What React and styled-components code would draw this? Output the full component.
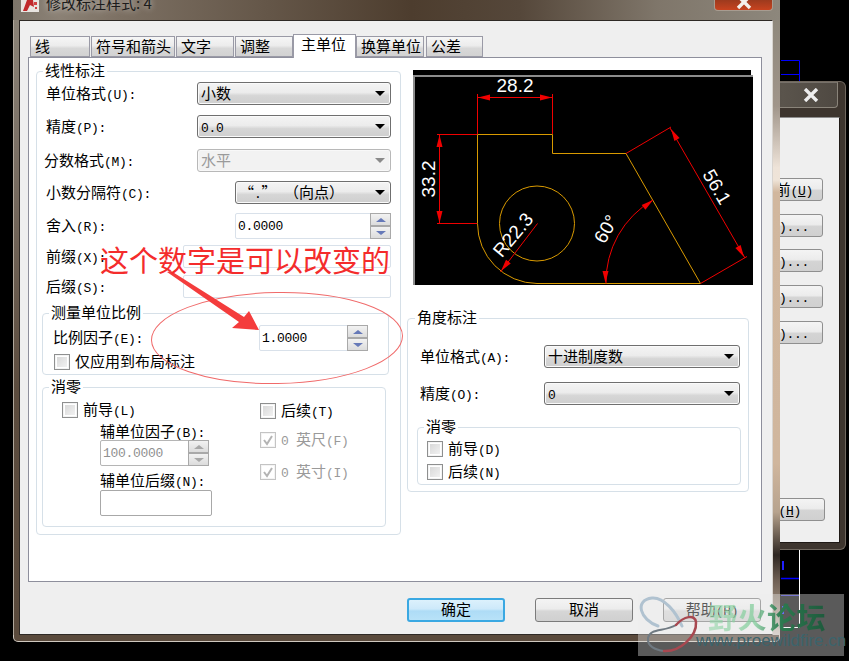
import React from "react";
import styled, { createGlobalStyle } from "styled-components";

const GlobalStyle = createGlobalStyle`
  html, body { margin: 0; padding: 0; background: #000; }
  body { font-family: "Noto Sans CJK SC", "Liberation Sans", sans-serif; font-size: 15px; color: #000; }
`;

const Page = styled.div`
  position: relative;
  width: 849px;
  height: 661px;
  overflow: hidden;
  background: #000;
`;

const Latin = styled.span`
  font-family: "Liberation Mono", monospace;
  font-size: 13px;
  letter-spacing: -0.3px;
`;

// SimSun look: latin runs are half the width of a CJK glyph
const T = ({ children }) =>
  String(children)
    .split(/([\x20-\x7e]+)/)
    .map((s, i) => (/^[\x20-\x7e]+$/.test(s) ? <Latin key={i}>{s}</Latin> : s));

const CadLines = styled.svg`
  position: absolute;
  left: 0;
  top: 0;
`;

/* back window */
const BackWindow = styled.div`
  position: absolute;
  left: 700px;
  top: 81px;
  width: 146px;
  height: 469px;
  box-sizing: border-box;
  display: flex;
  flex-direction: column;
  background: #3d352e;
  border: 1px solid #6f675e;
  border-left: none;
  border-radius: 0 6px 6px 0;
  padding: 0 5px 6px 0;
`;

const BackTitle = styled.div`
  height: 24px;
  margin-right: 2px;
  display: flex;
  justify-content: flex-end;
  align-items: center;
  padding-right: 18px;
  background: linear-gradient(90deg, #3e3ca0 0, #4a4640 34%, #5a544c 60%, #4f4942 100%);
  border: 1px solid #8a847a;
  border-top-color: #77716a;
  border-radius: 0 0 4px 4px;
`;

const BackClose = styled.svg`
  display: block;
`;

const BackClient = styled.div`
  flex: 1;
  margin-top: 9px;
  display: flex;
  flex-direction: column;
  align-items: flex-end;
  padding: 60px 16px 0 0;
  background: #efefef;
  border: 1px solid #1f1a16;
  border-top-color: #8d8d8d;
`;

const BackButton = styled.div`
  width: 100px;
  height: 23px;
  box-sizing: border-box;
  margin-top: ${(p) => p.$top}px;
  margin-right: ${(p) => p.$right || 0}px;
  padding-right: ${(p) => p.$pad}px;
  text-align: right;
  line-height: 19px;
  border: 1px solid #8f8f8f;
  border-radius: 3px;
  background: linear-gradient(#f4f4f4 0, #ececec 45%, #d4d4d4 55%, #d0d0d0 100%);
`;

const Under = styled.span`
  text-decoration: underline;
`;

/* main dialog */
const Dialog = styled.div`
  position: relative;
  width: 767px;
  height: 642px;
  margin-left: 13px;
  display: flex;
  flex-direction: column;
`;

const TitleBar = styled.div`
  height: 20px;
  box-sizing: border-box;
  display: flex;
  align-items: flex-start;
  padding-left: 8px;
  overflow: hidden;
  background: linear-gradient(90deg, #7d756a 0, #8b8175 6%, #7c7063 14%, #4d3d2e 52%, #55473a 66%, #7f766a 84%, #8d877c 100%);
`;

const TitleIcon = styled.svg`
  flex: none;
`;

const TitleText = styled.div`
  margin: -8px 0 0 7px;
  font-size: 15px;
  line-height: 22px;
  color: #1c1c1c;
  text-shadow: 0 0 6px rgba(255, 255, 255, 0.65);
`;

const CloseButton = styled.div`
  flex: none;
  margin-left: auto;
  margin-right: 7px;
  width: 59px;
  height: 11px;
  box-sizing: border-box;
  display: flex;
  justify-content: center;
  background: linear-gradient(#9c3a1e, #c8431f);
  border: 1px solid #a89c90;
  border-top: none;
  border-radius: 0 0 4px 4px;
  overflow: hidden;
`;

const Middle = styled.div`
  display: flex;
  height: 615px;
`;

const SideLeft = styled.div`
  width: 6px;
  box-sizing: border-box;
  background: linear-gradient(#8b8377 0, #7c7166 20%, #5c4c3e 60%, #5a4a3c 100%);
  border-left: 1px solid #b0a89c;
`;

const SideRight = styled.div`
  width: 7px;
  box-sizing: border-box;
  background: linear-gradient(#8f887c 0, #a0958a 14%, #eee3d8 24%, #efe4d8 26%, #d1b79e 28%, #d0b69d 72%, #b7a38e 80%, #2f2722 87%, #6d5e52 91%, #a29282 96%, #cfc7bf 100%);
`;

const Client = styled.div`
  width: 754px;
  box-sizing: border-box;
  background: #efefef;
  border: 1px solid #2e2925;
  border-right-color: #d8d4cf;
`;

const BottomEdge = styled.div`
  height: 7px;
  box-sizing: border-box;
  background: #5a4a3c;
  border: 1px solid #cfc8bf;
  border-top: none;
  border-radius: 0 0 5px 5px;
`;

const TabRow = styled.div`
  display: flex;
  align-items: flex-end;
  height: 36px;
  padding-left: 10px;
`;

const Tab = styled.div`
  position: relative;
  width: ${(p) => p.$w}px;
  height: ${(p) => (p.$active ? 24 : 21)}px;
  margin-right: ${(p) => p.$gap}px;
  box-sizing: border-box;
  padding-left: ${(p) => (p.$active ? 7 : 4)}px;
  line-height: 18px;
  border: 1px solid #9a9aa6;
  border-bottom: ${(p) => (p.$active ? "none" : "1px solid #9a9aa6")};
  background: ${(p) =>
    p.$active
      ? "#fff"
      : "linear-gradient(#f6f6f6 0, #ececec 45%, #d8d8d8 60%, #d2d2d2 100%)"};
  z-index: ${(p) => (p.$active ? 1 : 0)};
  margin-bottom: ${(p) => (p.$active ? -1 : 0)}px;
`;

const TabPanel = styled.div`
  width: 734px;
  height: 525px;
  margin-left: 8px;
  box-sizing: border-box;
  display: flex;
  gap: 6px;
  padding: 5px 0 0 7px;
  background: #fff;
  border: 1px solid #8e8f9c;
`;

const Group = styled.fieldset`
  margin: ${(p) => p.$top || 0}px 0 0 0;
  padding: ${(p) => p.$pad || "0"};
  box-sizing: border-box;
  width: ${(p) => p.$w}px;
  height: ${(p) => p.$h}px;
  min-width: 0;
  border: 1px solid #d6e0e8;
  border-radius: 4px;
`;

const Legend = styled.legend`
  margin-left: ${(p) => p.$left}px;
  padding: 0 2px;
  height: 16px;
  line-height: 14px;
`;

const Row = styled.div`
  display: flex;
  align-items: center;
  height: ${(p) => p.$h || 23}px;
  margin-top: ${(p) => p.$top || 0}px;
  padding-left: ${(p) => (p.$left === undefined ? 4 : p.$left)}px;
  padding-right: ${(p) => (p.$right === undefined ? 4 : p.$right)}px;
`;

const Label = styled.div`
  white-space: nowrap;
  margin-left: ${(p) => p.$left || 0}px;
  padding-bottom: 3px;
  color: ${(p) => (p.$disabled ? "#9a9a9a" : "#000")};
`;

const SelectBox = styled.div`
  margin-left: auto;
  width: ${(p) => p.$w}px;
  height: 23px;
  box-sizing: border-box;
  display: flex;
  align-items: center;
  justify-content: space-between;
  padding: 0 5px 0 3px;
  white-space: nowrap;
  border: 1px solid ${(p) => (p.$disabled ? "#b8b8b8" : "#6f6f6f")};
  border-radius: 3px;
  color: ${(p) => (p.$disabled ? "#9a9a9a" : "#000")};
  background: ${(p) =>
    p.$disabled
      ? "#f2f2f2"
      : "linear-gradient(#f4f4f4 0, #ececec 45%, #d6d6d6 60%, #cfcfcf 100%)"};
  box-shadow: inset 0 0 0 1px ${(p) => (p.$disabled ? "#f8f8f8" : "#fafafa")};
`;

const SelectText = styled.span`
  padding-bottom: 2px;
`;

const Caret = styled.span`
  flex: none;
  width: 0;
  height: 0;
  border-left: 5px solid transparent;
  border-right: 5px solid transparent;
  border-top: 5px solid ${(p) => (p.$disabled ? "#8a8a8a" : "#000")};
`;

const Select = ({ w, disabled, children }) => (
  <SelectBox $w={w} $disabled={disabled}>
    <SelectText>
      <T>{children}</T>
    </SelectText>
    <Caret $disabled={disabled} />
  </SelectBox>
);

const TextBox = styled.div`
  margin-left: ${(p) => (p.$flush ? 0 : "auto")};
  width: ${(p) => p.$w}px;
  height: ${(p) => p.$h}px;
  box-sizing: border-box;
  background: #fff;
  border: 1px solid ${(p) => p.$line || "#d9e1ea"};
  border-radius: 2px;
`;

const SpinBox = styled.div`
  margin-left: ${(p) => (p.$flush ? 0 : "auto")};
  width: ${(p) => p.$w}px;
  height: 26px;
  box-sizing: border-box;
  display: flex;
  align-items: stretch;
  justify-content: space-between;
  background: #fff;
  border: 1px solid ${(p) => (p.$disabled ? "#b5b5b5" : "#d9e1ea")};
  border-radius: 2px;
`;

const SpinValue = styled.div`
  padding-left: 2px;
  line-height: 20px;
  color: ${(p) => (p.$disabled ? "#909090" : "#000")};
`;

const SpinButtons = styled.div`
  flex: none;
  width: 21px;
  display: flex;
  flex-direction: column;
  gap: 2px;
  margin: -1px -1px -1px 0;
  box-sizing: border-box;
  padding: 1px;
  background: #a9a9a9;
`;

const SpinButton = styled.div`
  flex: 1;
  display: flex;
  align-items: center;
  justify-content: center;
  background: linear-gradient(#f2f2f2, #dcdcdc);
`;

const SpinArrow = styled.span`
  width: 0;
  height: 0;
  border-left: 5px solid transparent;
  border-right: 5px solid transparent;
  ${(p) => (p.$down ? "border-top" : "border-bottom")}: 4px solid ${(p) =>
    p.$disabled ? "#a8a8a8" : "#6679b8"};
`;

const Spin = ({ w, flush, disabled, children }) => (
  <SpinBox $w={w} $flush={flush} $disabled={disabled}>
    <SpinValue $disabled={disabled}>
      <T>{children}</T>
    </SpinValue>
    <SpinButtons>
      <SpinButton>
        <SpinArrow $disabled={disabled} />
      </SpinButton>
      <SpinButton>
        <SpinArrow $down $disabled={disabled} />
      </SpinButton>
    </SpinButtons>
  </SpinBox>
);

const CheckBox = styled.div`
  flex: none;
  width: 16px;
  height: 16px;
  box-sizing: border-box;
  display: flex;
  align-items: center;
  justify-content: center;
  border: 1px solid ${(p) => (p.$disabled ? "#c4c4c4" : "#8e8f8f")};
  background: #fff;
  box-shadow: inset 0 0 0 1px #f4f4f4;
  background-image: ${(p) =>
    p.$disabled ? "none" : "linear-gradient(135deg, #d4d4d4, #f6f6f6)"};
  background-clip: content-box;
  padding: 2px;
`;

const CheckMark = styled.svg`
  flex: none;
  margin: -2px;
`;

const Check = ({ checked, disabled }) => (
  <CheckBox $disabled={disabled}>
    {checked && (
      <CheckMark width="12" height="12" viewBox="0 0 12 12">
        <path d="M2 6 L5 10 L10 2" fill="none" stroke="#b4b4b4" strokeWidth="2" />
      </CheckMark>
    )}
  </CheckBox>
);

const ZeroColumns = styled.div`
  display: flex;
`;

const ZeroLeft = styled.div`
  width: 217px;
  padding-left: 19px;
  box-sizing: border-box;
`;

const ZeroRight = styled.div`
  flex: 1;
`;

const Indent = styled.div`
  padding-left: 38px;
`;

const RightColumn = styled.div`
  width: 342px;
  padding-top: 7px;
`;

const Preview = styled.svg`
  display: block;
  margin-left: 6px;
`;

const ButtonRow = styled.div`
  display: flex;
  justify-content: flex-end;
  gap: 30px;
  margin-top: 16px;
  padding-right: 11px;
`;

const DialogButton = styled.div`
  width: 98px;
  height: 24px;
  box-sizing: border-box;
  text-align: center;
  line-height: ${(p) => (p.$primary ? 18 : 19)}px;
  border-radius: 3px;
  border: ${(p) => (p.$primary ? "2px solid #3aa8e2" : "1px solid #7b7b7b")};
  background: ${(p) =>
    p.$primary
      ? "linear-gradient(#dcf1fc 0, #cde9fa 45%, #aedcf6 55%, #b8e2f8 100%)"
      : "linear-gradient(#f4f4f4 0, #ececec 45%, #d6d6d6 55%, #d0d0d0 100%)"};
`;

/* things drawn over the dialog */
const Overlay = styled.svg`
  position: absolute;
  left: 0;
  top: 0;
  pointer-events: none;
`;

const Annotation = styled.div`
  position: absolute;
  left: 100px;
  top: 239px;
  font-size: 29px;
  line-height: 40px;
  white-space: nowrap;
  color: #f42c2c;
`;

const Watermark = styled.div`
  position: absolute;
  left: 638px;
  top: 594px;
  width: 206px;
  height: 62px;
  background: rgba(237, 237, 237, 0.38);
`;

const WatermarkTitle = styled.div`
  position: absolute;
  left: 70px;
  top: 2px;
  font-size: 29px;
  line-height: 40px;
  font-weight: 700;
  letter-spacing: 0.5px;
  white-space: nowrap;
  color: transparent;
  background: linear-gradient(90deg, rgba(150, 215, 170, 0.6) 0, rgba(130, 205, 155, 0.75) 40%, #2d7a50 62%, #1d5a3c 100%);
  -webkit-background-clip: text;
  background-clip: text;
`;

const WatermarkUrl = styled.div`
  position: absolute;
  left: 58px;
  top: 37px;
  font-family: "Liberation Sans", sans-serif;
  font-size: 17px;
  line-height: 20px;
  white-space: nowrap;
  color: #3c646c;
`;

const TABS = [
  { name: "线", w: 60, gap: 1 },
  { name: "符号和箭头", w: 84, gap: 1 },
  { name: "文字", w: 58, gap: 1 },
  { name: "调整", w: 58, gap: 0 },
  { name: "主单位", w: 63, gap: 0, active: true },
  { name: "换算单位", w: 68, gap: 2 },
  { name: "公差", w: 57, gap: 0 },
];

const YELLOW = "#d99a00";
const RED = "#f00000";

const Arrow = ({ x, y, angle }) => (
  <polygon
    points="0,0 -12,-3 -12,3"
    fill={RED}
    transform={`translate(${x} ${y}) rotate(${angle})`}
  />
);

const DimText = ({ x, y, angle = 0, children }) => (
  <text
    x={x}
    y={y}
    transform={`rotate(${angle} ${x} ${y})`}
    fill="#fff"
    fontFamily="Liberation Sans, sans-serif"
    fontSize="19"
    textAnchor="middle"
    dominantBaseline="central"
  >
    {children}
  </text>
);

const PreviewDrawing = () => (
  <Preview width="340" height="215" viewBox="413 70 340 215">
    <rect x="413" y="70" width="340" height="215" fill="#fff" />
    <rect x="413" y="70" width="338" height="5" fill="#000" />
    <rect x="413" y="75" width="2" height="210" fill="#8c8c8c" />
    <rect x="413" y="75" width="340" height="2" fill="#8c8c8c" />
    <rect x="415" y="77" width="338" height="208" fill="#000" />
    <g fill="none" stroke={YELLOW} strokeWidth="1">
      <path d="M477.5 223.5 V134.5 H552.5 V153.5 H626 L700.5 283.5 H537 A60 60 0 0 1 477.5 223.5" />
      <circle cx="537" cy="223.5" r="37.5" />
    </g>
    <g fill="none" stroke={RED} strokeWidth="1">
      <path d="M477.5 134 V94 M552.5 134 V94 M477.5 97.5 H552.5" />
      <path d="M437 134.5 H477 M437 223.5 H477 M439.5 134.5 V223.5" />
      <path d="M537.5 223.5 L500.5 272" />
      <path d="M626 153.5 L671 127 M700.5 283.5 L747 256.5 M670 128 L745 258" />
      <path d="M606 283.5 A94.5 94.5 0 0 1 653 200" />
    </g>
    <Arrow x={478} y={97.5} angle={180} />
    <Arrow x={552} y={97.5} angle={0} />
    <Arrow x={439.5} y={135} angle={270} />
    <Arrow x={439.5} y={223} angle={90} />
    <Arrow x={501} y={271} angle={128} />
    <Arrow x={671} y={129} angle={240} />
    <Arrow x={744} y={257} angle={60} />
    <Arrow x={605.5} y={283} angle={90} />
    <Arrow x={653} y={200} angle={-38} />
    <DimText x={515} y={85}>28.2</DimText>
    <DimText x={428.5} y={179} angle={-90}>33.2</DimText>
    <DimText x={513} y={235} angle={-50}>R22.3</DimText>
    <DimText x={606} y={229} angle={-60}>60°</DimText>
    <DimText x={717} y={187} angle={60}>56.1</DimText>
  </Preview>
);

const App = () => (
  <Page>
    <GlobalStyle />
    <CadLines width="849" height="661">
      <path d="M781 60.5 H799.5 V81 M781 74.5 H799.5" fill="none" stroke="#0000ff" />
      <path d="M781 578.5 H799.5" stroke="#0000ff" strokeWidth="1.5" />
      <path d="M781 595.5 H799.5" stroke="#3030c0" />
      <path d="M799.5 550 V627.5 H781" fill="none" stroke="#fff" />
      <path d="M783 561 V570 M783 606 V614" stroke="#2020ff" strokeWidth="2" />
    </CadLines>

    <BackWindow>
      <BackTitle>
        <BackClose width="16" height="14" viewBox="0 0 16 14">
          <path d="M2 1 L14 13 M14 1 L2 13" stroke="#eeeeee" strokeWidth="3.4" />
        </BackClose>
      </BackTitle>
      <BackClient>
        <BackButton $top={0} $pad={9}>
          前<Latin>(<Under>U</Under>)</Latin>
        </BackButton>
        <BackButton $top={13} $pad={13}><T>)...</T></BackButton>
        <BackButton $top={12} $pad={13}><T>)...</T></BackButton>
        <BackButton $top={13} $pad={13}><T>)...</T></BackButton>
        <BackButton $top={13} $pad={13}><T>)...</T></BackButton>
        <BackButton $top={154} $right={-2} $pad={23}>
          <Latin>(<Under>H</Under>)</Latin>
        </BackButton>
      </BackClient>
    </BackWindow>

    <Dialog>
      <TitleBar>
        <TitleIcon width="18" height="12" viewBox="0 0 18 12">
          <rect width="18" height="12" fill="#e8e4e0" />
          <path d="M2 11 L6 0 H12 L13 7 L9 5 L6 11 Z" fill="#c0282a" />
          <path d="M13 2 h3 v3 h-3 z M14 7 h2 v2 h-2 z" fill="#d04040" />
        </TitleIcon>
        <TitleText>修改标注样式: 4</TitleText>
        <CloseButton>
          <svg width="16" height="10" viewBox="0 0 16 10">
            <path d="M2 -4 L14 8 M14 -4 L2 8" stroke="#f4f0ec" strokeWidth="3.4" />
          </svg>
        </CloseButton>
      </TitleBar>
      <Middle>
        <SideLeft />
        <Client>
          <TabRow>
            {TABS.map((t) => (
              <Tab key={t.name} $w={t.w} $gap={t.gap} $active={t.active}>
                {t.name}
              </Tab>
            ))}
          </TabRow>
          <TabPanel>
            <Group $w={365} $h={472} $pad="0 5px">
              <Legend $left={1}>线性标注</Legend>
              <Row $top={3}>
                <Label><T>单位格式(U):</T></Label>
                <Select w={194}>小数</Select>
              </Row>
              <Row $top={10}>
                <Label><T>精度(P):</T></Label>
                <Select w={194}>0.0</Select>
              </Row>
              <Row $top={11}>
                <Label $left={-2}><T>分数格式(M):</T></Label>
                <Select w={194} disabled>水平</Select>
              </Row>
              <Row $top={9}>
                <Label><T>小数分隔符(C):</T></Label>
                <Select w={156}>{"“.”\u2002（向点）"}</Select>
              </Row>
              <Row $top={9} $h={26}>
                <Label><T>舍入(R):</T></Label>
                <Spin w={156}>0.0000</Spin>
              </Row>
              <Row $top={6}>
                <Label><T>前缀(X):</T></Label>
                <TextBox $w={208} $h={23} />
              </Row>
              <Row $top={7}>
                <Label><T>后缀(S):</T></Label>
                <TextBox $w={208} $h={23} />
              </Row>
              <Group $w={347} $h={70} $top={7}>
                <Legend $left={6}>测量单位比例</Legend>
                <Row $top={4} $h={26} $left={10} $right={20}>
                  <Label><T>比例因子(E):</T></Label>
                  <Spin w={109}>1.0000</Spin>
                </Row>
                <Row $top={3} $h={16} $left={11}>
                  <Check />
                  <Label $left={5}>仅应用到布局标注</Label>
                </Row>
              </Group>
              <Group $w={344} $h={148} $top={4}>
                <Legend $left={6}>消零</Legend>
                <ZeroColumns>
                  <ZeroLeft>
                    <Row $top={7} $h={16} $left={0}>
                      <Check />
                      <Label $left={5}><T>前导(L)</T></Label>
                    </Row>
                    <Indent>
                      <Row $top={6} $h={16} $left={0}>
                        <Label><T>辅单位因子(B):</T></Label>
                      </Row>
                      <Row $h={26} $left={0} $right={0}>
                        <Spin w={109} flush disabled>100.0000</Spin>
                      </Row>
                      <Row $top={5} $h={19} $left={0}>
                        <Label><T>辅单位后缀(N):</T></Label>
                      </Row>
                      <Row $h={26} $left={0} $right={0}>
                        <TextBox $w={112} $h={26} $flush $line="#a8a8a8" />
                      </Row>
                    </Indent>
                  </ZeroLeft>
                  <ZeroRight>
                    <Row $top={8} $h={16} $left={0}>
                      <Check />
                      <Label $left={5}><T>后续(T)</T></Label>
                    </Row>
                    <Row $top={13} $h={16} $left={0}>
                      <Check checked disabled />
                      <Label $left={5} $disabled><T>0 英尺(F)</T></Label>
                    </Row>
                    <Row $top={16} $h={16} $left={0}>
                      <Check checked disabled />
                      <Label $left={5} $disabled><T>0 英寸(I)</T></Label>
                    </Row>
                  </ZeroRight>
                </ZeroColumns>
              </Group>
            </Group>

            <RightColumn>
              <PreviewDrawing />
              <Group $w={342} $h={182} $top={25} $pad="0 8px 0 9px">
                <Legend $left={-2}>角度标注</Legend>
                <Row $top={19} $left={3} $right={0}>
                  <Label><T>单位格式(A):</T></Label>
                  <Select w={196}>十进制度数</Select>
                </Row>
                <Row $top={14} $left={3} $right={0}>
                  <Label><T>精度(O):</T></Label>
                  <Select w={196}>0</Select>
                </Row>
                <Group $w={324} $h={66} $top={14}>
                  <Legend $left={6}>消零</Legend>
                  <Row $top={6} $h={16} $left={9}>
                    <Check />
                    <Label $left={5}><T>前导(D)</T></Label>
                  </Row>
                  <Row $top={7} $h={16} $left={9}>
                    <Check />
                    <Label $left={5}><T>后续(N)</T></Label>
                  </Row>
                </Group>
              </Group>
            </RightColumn>
          </TabPanel>
          <ButtonRow>
            <DialogButton $primary>确定</DialogButton>
            <DialogButton>取消</DialogButton>
            <DialogButton><T>帮助(H)</T></DialogButton>
          </ButtonRow>
        </Client>
        <SideRight />
      </Middle>
      <BottomEdge />
    </Dialog>

    <Overlay width="849" height="661">
      <ellipse
        cx="277"
        cy="338"
        rx="125.5"
        ry="45.5"
        fill="none"
        stroke="#f06a6a"
        strokeWidth="1"
        transform="rotate(-1 277 338)"
      />
      <polygon
        points="167,272 171,271 244,317 249,311 259,330 232,328 239,322"
        fill="#f43c3c"
      />
    </Overlay>
    <Annotation>这个数字是可以改变的</Annotation>

    <Watermark>
      <WatermarkTitle>野火论坛</WatermarkTitle>
      <WatermarkUrl>www.proewildfire.cn</WatermarkUrl>
    </Watermark>
    <Overlay width="849" height="661">
      <g fill="none" strokeLinecap="round">
        <path d="M658 626 C640 620 634 600 652 598 C664 597 676 612 682 626" stroke="#b0c2d0" strokeWidth="3" />
        <path d="M676 625 C664 632 650 628 648 638 C647 646 655 650 664 651" stroke="#707a82" strokeWidth="2" />
        <path d="M664 651 C680 652 697 636 696 622 C695 614 684 616 676 625" stroke="#a84850" strokeWidth="2.5" />
      </g>
    </Overlay>
  </Page>
);

export default App;
